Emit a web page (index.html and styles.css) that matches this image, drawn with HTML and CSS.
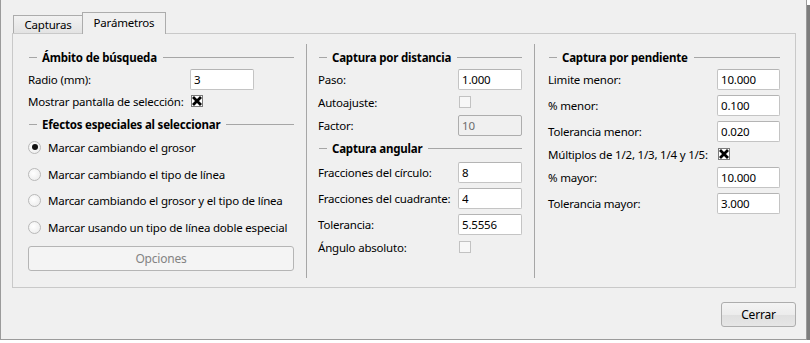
FILE: index.html
```html
<!DOCTYPE html>
<html>
<head>
  <meta charset="UTF-8">
  <title>Parámetros de captura</title>
  <link rel="stylesheet" href="styles.css">
</head>
<body>
  <div class="window">
    <div class="tabs">
      <div class="tab">Capturas</div>
      <div class="tab active">Parámetros</div>
    </div>

    <div class="pane">
      <!-- Ámbito de búsqueda / efectos -->
      <div class="column col-search">
        <div class="group-title">Ámbito de búsqueda</div>
        <div class="field first">
          <label>Radio (mm):</label>
          <input type="text" class="text-input" value="3">
        </div>
        <div class="check-row">
          <label>Mostrar pantalla de selección:</label>
          <span class="checkbox checked"><svg width="10" height="10" viewBox="0 0 10 10"><path d="M2 2 L8 8 M8 2 L2 8" stroke="#000" stroke-width="2.8" stroke-linecap="square"/></svg></span>
        </div>
        <div class="group-title sub">Efectos especiales al seleccionar</div>
        <div class="radio-row r1"><span class="radio selected"></span>Marcar cambiando el grosor</div>
        <div class="radio-row r2"><span class="radio"></span>Marcar cambiando el tipo de línea</div>
        <div class="radio-row r3"><span class="radio"></span>Marcar cambiando el grosor y el tipo de línea</div>
        <div class="radio-row r4"><span class="radio"></span>Marcar usando un tipo de línea doble especial</div>
        <button class="btn btn-wide" disabled>Opciones</button>
      </div>

      <div class="divider"></div>

      <!-- Captura por distancia / angular -->
      <div class="column col-distance">
        <div class="group-title">Captura por distancia</div>
        <div class="field first">
          <label>Paso:</label>
          <input type="text" class="text-input" value="1.000">
        </div>
        <div class="check-row">
          <label>Autoajuste:</label>
          <span class="checkbox"></span>
        </div>
        <div class="field after-check">
          <label>Factor:</label>
          <input type="text" class="text-input" value="10" disabled>
        </div>
        <div class="group-title sub">Captura angular</div>
        <div class="field first-sub">
          <label>Fracciones del círculo:</label>
          <input type="text" class="text-input" value="8">
        </div>
        <div class="field">
          <label>Fracciones del cuadrante:</label>
          <input type="text" class="text-input" value="4">
        </div>
        <div class="field">
          <label>Tolerancia:</label>
          <input type="text" class="text-input" value="5.5556">
        </div>
        <div class="check-row">
          <label>Ángulo absoluto:</label>
          <span class="checkbox"></span>
        </div>
      </div>

      <div class="divider second"></div>

      <!-- Captura por pendiente -->
      <div class="column col-slope">
        <div class="group-title">Captura por pendiente</div>
        <div class="field first">
          <label>Limite menor:</label>
          <input type="text" class="text-input" value="10.000">
        </div>
        <div class="field">
          <label>% menor:</label>
          <input type="text" class="text-input" value="0.100">
        </div>
        <div class="field">
          <label>Tolerancia menor:</label>
          <input type="text" class="text-input" value="0.020">
        </div>
        <div class="check-row">
          <label>Múltiplos de 1/2, 1/3, 1/4 y 1/5:</label>
          <span class="checkbox checked"><svg width="10" height="10" viewBox="0 0 10 10"><path d="M2 2 L8 8 M8 2 L2 8" stroke="#000" stroke-width="2.8" stroke-linecap="square"/></svg></span>
        </div>
        <div class="field after-check">
          <label>% mayor:</label>
          <input type="text" class="text-input" value="10.000">
        </div>
        <div class="field">
          <label>Tolerancia mayor:</label>
          <input type="text" class="text-input" value="3.000">
        </div>
      </div>
    </div>

    <div class="footer">
      <button class="btn btn-close">Cerrar</button>
    </div>
  </div>
</body>
</html>
```

FILE: styles.css
```css
* { box-sizing: border-box; }
body {
  margin: 0;
  background: #fff;
  font-family: "Noto Sans", "DejaVu Sans", sans-serif;
  font-size: 11.5px;
  letter-spacing: -0.2px;
  color: #000;
}
.window {
  width: 807px;
  height: 340px;
  background: #f0f0f0;
  border-left: 1px solid #9b9b9b;
  border-right: 1px solid #9b9b9b;
  border-bottom: 1px solid #9b9b9b;
  box-shadow: 4px 4px 0 -1px #7d7d7d;
  padding: 12px 10px 0 11px;
}

/* tabs */
.tabs {
  display: flex;
  align-items: flex-end;
  height: 21px;
  padding-left: 1px;
}
.tab {
  height: 18px;
  width: 70px;
  border: 1px solid #acacac;
  border-bottom: none;
  background: linear-gradient(#f2f2f2, #e3e3e3);
  text-align: center;
  line-height: 17px;
}
.tab.active {
  position: relative;
  z-index: 1;
  width: 84px;
  height: 22px;
  margin-bottom: -1px;
  margin-left: -1px;
  background: #f0f0f0;
  line-height: 20px;
}

/* pane */
.pane {
  display: flex;
  height: 255px;
  border: 1px solid #c9c9c9;
  padding: 0 15px;
}
.column {
  display: flex;
  flex-direction: column;
  padding-top: 14px;
}
.col-search { width: 266px; }
.col-distance { width: 204px; margin-left: 11px; }
.col-slope { width: 232px; margin-left: 13px; }
.divider {
  width: 1px;
  background: #a6a6a6;
  margin: 10px 0 9px 12px;
}
.divider.second { margin-left: 12px; }

.group-title {
  display: flex;
  align-items: center;
  height: 18px;
  font-weight: bold;
}
.group-title::before {
  content: "";
  width: 8px;
  height: 1px;
  background: #a6a6a6;
  margin: 0 5px 0 1px;
}
.group-title::after {
  content: "";
  flex: 1;
  height: 1px;
  background: #a6a6a6;
  margin-left: 6px;
}

/* rows */
.field, .check-row {
  display: flex;
  align-items: center;
}
.field { height: 21px; margin-top: 5px; }
.field.first { margin-top: 3px; }
.field.after-check { margin-top: 4px; }
.field.first-sub { margin-top: 5px; }
.check-row { height: 18px; margin-top: 3px; }
.col-search .check-row { margin-top: 2px; }
.group-title.sub { margin-top: 5px; }
.col-distance .group-title.sub { margin-top: 3px; }

.col-search label { width: 162px; }
.col-distance label { width: 140px; }
.col-slope label { width: 169px; }

.text-input {
  width: 64px;
  height: 21px;
  border: 1px solid #c4c4c4;
  border-top-color: #b4b4b4;
  border-radius: 2px;
  background: #fff;
  padding: 0 3px;
  font-family: inherit;
  font-size: 11.5px;
  letter-spacing: -0.2px;
  color: #000;
}
.col-slope .text-input { width: 63px; }
.text-input:disabled {
  background: #f0f0f0;
  border-color: #adadad;
  color: #6d6d6d;
}

.checkbox {
  display: flex;
  align-items: center;
  justify-content: center;
  width: 12px;
  height: 12px;
  margin-left: 1px;
  border: 1px solid #c2c2c2;
  background: #f7f7f7;
}
.checkbox.checked {
  border-color: #7a7a7a;
  background: #fff;
}

/* radios */
.radio-row {
  display: flex;
  align-items: center;
  height: 18px;
}
.radio-row.r1 { margin-top: 5px; }
.radio-row.r2 { margin-top: 9px; }
.radio-row.r3 { margin-top: 8px; }
.radio-row.r4 { margin-top: 9px; }
.radio {
  display: flex;
  align-items: center;
  justify-content: center;
  width: 13px;
  height: 13px;
  margin-right: 7px;
  border: 1px solid #b9b9b9;
  border-radius: 50%;
  background: radial-gradient(circle at 40% 40%, #fff, #e9e9e9);
}
.radio.selected::after {
  content: "";
  width: 6px;
  height: 6px;
  border-radius: 50%;
  background: #111;
}

/* buttons */
.btn {
  font-family: inherit;
  font-size: 12px;
  letter-spacing: -0.2px;
  color: #000;
  border: 1px solid #adadad;
  border-radius: 3px;
  background: linear-gradient(#f4f4f4 0%, #ececec 50%, #dfdfdf 51%, #e6e6e6 100%);
}
.btn-wide {
  width: 266px;
  height: 25px;
  margin-top: 10px;
}
.btn:disabled {
  background: #f4f4f4;
  border-color: #b5b5b5;
  color: #838383;
}
.footer {
  display: flex;
  justify-content: flex-end;
  padding-top: 14px;
}
.btn-close {
  width: 75px;
  height: 25px;
}
```
